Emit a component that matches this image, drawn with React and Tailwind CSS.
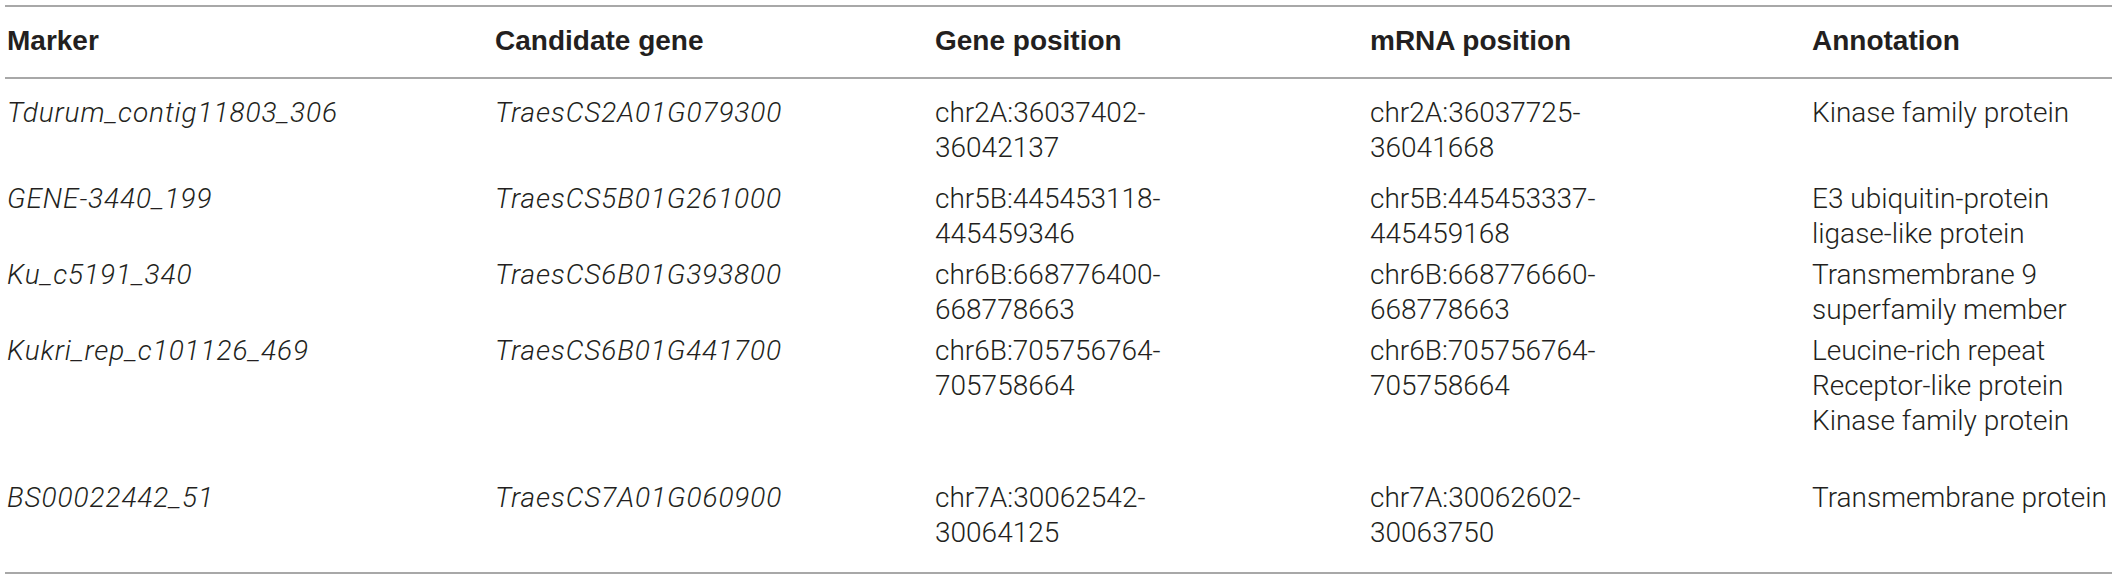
const rows = [
  {
    marker: "Tdurum_contig11803_306",
    gene: "TraesCS2A01G079300",
    genePos: ["chr2A:36037402-", "36042137"],
    mrnaPos: ["chr2A:36037725-", "36041668"],
    annotation: ["Kinase family protein"],
    pad: "pt-[16px]",
  },
  {
    marker: "GENE-3440_199",
    gene: "TraesCS5B01G261000",
    genePos: ["chr5B:445453118-", "445459346"],
    mrnaPos: ["chr5B:445453337-", "445459168"],
    annotation: ["E3 ubiquitin-protein", "ligase-like protein"],
    pad: "pt-[16px]",
  },
  {
    marker: "Ku_c5191_340",
    gene: "TraesCS6B01G393800",
    genePos: ["chr6B:668776400-", "668778663"],
    mrnaPos: ["chr6B:668776660-", "668778663"],
    annotation: ["Transmembrane 9", "superfamily member"],
    pad: "pt-[6px]",
  },
  {
    marker: "Kukri_rep_c101126_469",
    gene: "TraesCS6B01G441700",
    genePos: ["chr6B:705756764-", "705758664"],
    mrnaPos: ["chr6B:705756764-", "705758664"],
    annotation: ["Leucine-rich repeat", "Receptor-like protein", "Kinase family protein"],
    pad: "pt-[6px]",
  },
  {
    marker: "BS00022442_51",
    gene: "TraesCS7A01G060900",
    genePos: ["chr7A:30062542-", "30064125"],
    mrnaPos: ["chr7A:30062602-", "30063750"],
    annotation: ["Transmembrane protein"],
    pad: "pt-[42px] pb-[22px]",
  },
];

const Lines = ({ lines }) => (
  <>
    {lines.map((l, i) => (
      <div key={i}>{l}</div>
    ))}
  </>
);

export default function App() {
  return (
    <div className="w-[2117px] h-[580px] bg-white px-[5px] pt-[5px]">
      <table className="w-full table-fixed border-collapse text-[#231f20]">
        <colgroup>
          <col className="w-[490px]" />
          <col className="w-[440px]" />
          <col className="w-[435px]" />
          <col className="w-[442px]" />
          <col />
        </colgroup>
        <thead>
          <tr className="border-t-2 border-b-2 border-[#a8a8a8] font-['Liberation_Sans',Arial,sans-serif] text-[28px] leading-[36px] text-left">
            <th className="pl-[2px] pt-[16px] pb-[18px] font-bold">Marker</th>
            <th className="pt-[16px] pb-[18px] font-bold">Candidate gene</th>
            <th className="pt-[16px] pb-[18px] font-bold">Gene position</th>
            <th className="pt-[16px] pb-[18px] font-bold">mRNA position</th>
            <th className="pt-[16px] pb-[18px] font-bold">Annotation</th>
          </tr>
        </thead>
        <tbody className="font-['Roboto',sans-serif] font-light text-[28px] leading-[35px] border-b-2 border-[#a8a8a8]">
          {rows.map((r, i) => (
            <tr key={i} className="align-top">
              <td className={`pl-[2px] italic tracking-[0.9px] ${r.pad}`}>{r.marker}</td>
              <td className={`italic tracking-[0.9px] ${r.pad}`}>{r.gene}</td>
              <td className={r.pad}>
                <Lines lines={r.genePos} />
              </td>
              <td className={r.pad}>
                <Lines lines={r.mrnaPos} />
              </td>
              <td className={r.pad}>
                <Lines lines={r.annotation} />
              </td>
            </tr>
          ))}
        </tbody>
      </table>
    </div>
  );
}
